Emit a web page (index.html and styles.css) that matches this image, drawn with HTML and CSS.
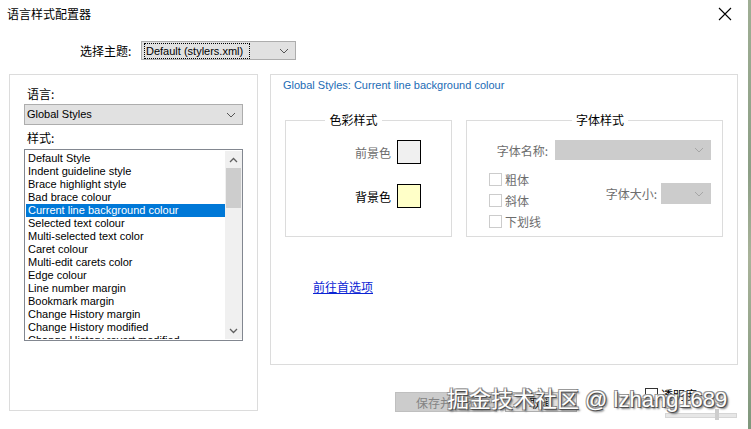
FILE: index.html
```html
<!DOCTYPE html>
<html lang="zh-CN">
<head>
    <meta charset="UTF-8">
    <meta name="viewport" content="width=device-width, initial-scale=1.0">
    <title>语言样式配置器</title>
    <link rel="stylesheet" href="styles.css">
</head>
<body>

<div class="window">
    <div class="dialog">
        <div class="titlebar">
            <span class="title">语言样式配置器</span>
            <svg class="close" width="14" height="14" viewBox="0 0 14 14">
                <path d="M1 1 L13 13 M13 1 L1 13" stroke="#000" stroke-width="1.1" fill="none"/>
            </svg>
        </div>

        <div class="theme-row">
            <span class="label">选择主题:</span>
            <div class="combo theme-combo">
                <span class="focus en">Default (stylers.xml)</span>
                <svg class="chev" width="10" height="6" viewBox="0 0 10 6"><path d="M1 1 L5 5 L9 1" stroke="#555" fill="none"/></svg>
            </div>
        </div>

        <div class="main">
            <div class="lang-group">
                <div class="field-label">语言:</div>
                <div class="combo lang-combo">
                    <span class="en">Global Styles</span>
                    <svg class="chev" width="10" height="6" viewBox="0 0 10 6"><path d="M1 1 L5 5 L9 1" stroke="#555" fill="none"/></svg>
                </div>
                <div class="field-label second">样式:</div>
                <div class="listbox">
                    <ul class="items en">
                        <li>Default Style</li>
                        <li>Indent guideline style</li>
                        <li>Brace highlight style</li>
                        <li>Bad brace colour</li>
                        <li class="selected">Current line background colour</li>
                        <li>Selected text colour</li>
                        <li>Multi-selected text color</li>
                        <li>Caret colour</li>
                        <li>Multi-edit carets color</li>
                        <li>Edge colour</li>
                        <li>Line number margin</li>
                        <li>Bookmark margin</li>
                        <li>Change History margin</li>
                        <li>Change History modified</li>
                        <li>Change History revert modified</li>
                    </ul>
                    <div class="vscroll">
                        <div class="arrow">
                            <svg width="9" height="6" viewBox="0 0 9 6"><path d="M1 5 L4.5 1.5 L8 5" stroke="#606060" stroke-width="1.3" fill="none"/></svg>
                        </div>
                        <div class="thumb"></div>
                        <div class="track"></div>
                        <div class="arrow">
                            <svg width="9" height="6" viewBox="0 0 9 6"><path d="M1 1 L4.5 4.5 L8 1" stroke="#606060" stroke-width="1.3" fill="none"/></svg>
                        </div>
                    </div>
                </div>
            </div>

            <div class="right-col">
                <div class="style-panel">
                    <div class="panel-title en">Global Styles: Current line background colour</div>
                    <div class="groups">
                        <fieldset class="group color-group">
                            <legend>色彩样式</legend>
                            <div class="color-row">
                                <span class="muted">前景色</span>
                                <span class="swatch fg"></span>
                            </div>
                            <div class="color-row">
                                <span>背景色</span>
                                <span class="swatch bg"></span>
                            </div>
                        </fieldset>
                        <fieldset class="group font-group">
                            <legend>字体样式</legend>
                            <div class="font-name-row">
                                <span class="muted">字体名称:</span>
                                <div class="combo disabled name-combo">
                                    <svg class="chev" width="10" height="6" viewBox="0 0 10 6"><path d="M1 1 L5 5 L9 1" stroke="#a6a6a6" fill="none"/></svg>
                                </div>
                            </div>
                            <div class="font-opts">
                                <div class="checks">
                                    <div class="check"><span class="box"></span><span class="muted">粗体</span></div>
                                    <div class="check"><span class="box"></span><span class="muted">斜体</span></div>
                                    <div class="check"><span class="box"></span><span class="muted">下划线</span></div>
                                </div>
                                <div class="size-row">
                                    <span class="muted">字体大小:</span>
                                    <div class="combo disabled size-combo">
                                        <svg class="chev" width="10" height="6" viewBox="0 0 10 6"><path d="M1 1 L5 5 L9 1" stroke="#a6a6a6" fill="none"/></svg>
                                    </div>
                                </div>
                            </div>
                        </fieldset>
                    </div>
                    <a class="pref-link" href="#">前往首选项</a>
                </div>

                <div class="bottom-row">
                    <button class="btn btn-disabled">保存并关闭</button>
                    <button class="btn">取消</button>
                    <div class="transparency">
                        <div class="check"><span class="box dark"></span><span>透明度</span></div>
                        <div class="slider"><span class="slider-thumb"></span></div>
                    </div>
                </div>
            </div>
        </div>
    </div>
    <div class="edge"></div>

    <div class="watermark">掘金技术社区 @ lzhang1689</div>
</div>

</body>
</html>
```

FILE: styles.css
```css
body {
    margin: 0;
    padding: 0;
    background-color: #fff;
    font-family: "Noto Sans CJK SC", "Noto Sans", sans-serif;
    font-size: 12px;
    color: #000;
}
.en {
    font-family: "Liberation Sans", "Noto Sans CJK SC", sans-serif;
    font-size: 11px;
}
.window {
    position: relative;
    display: flex;
    width: 751px;
    height: 429px;
    overflow: hidden;
}
.dialog {
    width: 748px;
    height: 429px;
}
.edge {
    width: 3px;
    background: linear-gradient(#9fae94, #8c9f86 40%, #a9b39a 60%, #7f977c);
}

.titlebar {
    height: 28px;
    display: flex;
    align-items: center;
    justify-content: space-between;
    padding: 0 16px 0 7px;
}
.title {
    line-height: 16px;
}

.theme-row {
    display: flex;
    align-items: center;
    margin-top: 13px;
    padding-left: 80px;
}
.theme-row .label {
    width: 61px;
}

.combo {
    box-sizing: border-box;
    display: flex;
    align-items: center;
    justify-content: space-between;
    background-color: #e1e1e1;
    border: 1px solid #adadad;
    padding: 0 6px 0 2px;
    line-height: 15px;
}
.combo.disabled {
    background-color: #cccccc;
    border-color: #cccccc;
    justify-content: flex-end;
}
.theme-combo {
    width: 155px;
    height: 19px;
}
.theme-combo .focus {
    border: 1px dotted #000;
    padding: 0 6px 0 1px;
    line-height: 14px;
}
.lang-combo {
    height: 21px;
    padding-left: 2px;
}

.main {
    display: flex;
    margin-top: 14px;
    padding-left: 9px;
}
.lang-group {
    box-sizing: border-box;
    width: 249px;
    height: 337px;
    border: 1px solid #dcdcdc;
    padding: 11px 14px 0 14px;
}
.field-label {
    line-height: 16px;
    padding-left: 3px;
    margin-bottom: 2px;
}
.field-label.second {
    margin-top: 5px;
    margin-bottom: 3px;
}

.listbox {
    box-sizing: border-box;
    display: flex;
    height: 192px;
    border: 1px solid #828790;
    padding: 1px 0 1px 1px;
}
.items {
    flex: 1;
    list-style: none;
    margin: 0;
    padding: 1px 0 0 0;
    overflow: hidden;
}
.items li {
    height: 13px;
    line-height: 13px;
    padding-left: 2px;
    white-space: nowrap;
}
.items li.selected {
    background-color: #0078d7;
    color: #fff;
}
.vscroll {
    width: 17px;
    display: flex;
    flex-direction: column;
    background-color: #f0f0f0;
}
.vscroll .arrow {
    height: 17px;
    display: flex;
    align-items: center;
    justify-content: center;
}
.vscroll .thumb {
    height: 40px;
    margin: 0 1px;
    background-color: #cdcdcd;
}
.vscroll .track {
    flex: 1;
}

.right-col {
    margin-left: 12px;
    width: 468px;
}
.style-panel {
    box-sizing: border-box;
    height: 291px;
    border: 1px solid #dcdcdc;
    padding: 2px 0 0 12px;
}
.panel-title {
    line-height: 16px;
    color: #1c6bb5;
}
.groups {
    display: flex;
    gap: 14px;
    margin-top: 19px;
    padding-left: 2px;
}
.group {
    box-sizing: border-box;
    margin: 0;
    border: 1px solid #dcdcdc;
    min-width: 0;
}
.group legend {
    margin: 0 auto;
    padding: 0 4px;
    line-height: 16px;
}
.color-group {
    width: 167px;
    padding: 12px 30px 28px 0;
    display: flex;
    flex-direction: column;
    align-items: flex-end;
    gap: 20px;
}
.color-row {
    display: flex;
    align-items: center;
    gap: 6px;
}
.swatch {
    box-sizing: border-box;
    width: 24px;
    height: 24px;
    border: 1px solid #000;
}
.swatch.fg {
    background-color: #f0f0f0;
}
.swatch.bg {
    background-color: #ffffc8;
}
.muted {
    color: #6d6d6d;
}

.font-group {
    width: 257px;
    padding: 12px 11px 8px 22px;
}
.font-name-row {
    display: flex;
    align-items: center;
    justify-content: flex-end;
    gap: 7px;
}
.name-combo {
    width: 156px;
    height: 20px;
}
.font-opts {
    display: flex;
    justify-content: space-between;
    align-items: flex-start;
    margin-top: 13px;
}
.checks {
    display: flex;
    flex-direction: column;
    gap: 8px;
}
.check {
    display: flex;
    align-items: center;
    gap: 3px;
    line-height: 13px;
}
.box {
    box-sizing: border-box;
    width: 13px;
    height: 13px;
    border: 1px solid #cccccc;
    background-color: #fff;
}
.box.dark {
    border-color: #333;
}
.size-row {
    display: flex;
    align-items: center;
    gap: 4px;
    margin-top: 10px;
}
.size-combo {
    width: 50px;
    height: 21px;
}
.pref-link {
    display: inline-block;
    margin: 42px 0 0 30px;
    color: #0b24d4;
    text-decoration: underline;
    line-height: 16px;
}

.bottom-row {
    display: flex;
    align-items: flex-start;
    margin-top: 23px;
    padding-left: 125px;
}
.btn {
    box-sizing: border-box;
    height: 20px;
    margin-top: 4px;
    border: 1px solid #adadad;
    background-color: #e1e1e1;
    font-family: inherit;
    font-size: 12px;
    padding: 0;
    width: 72px;
    margin-left: 8px;
}
.btn-disabled {
    width: 102px;
    margin-left: 0;
    background-color: #cccccc;
    border-color: #bfbfbf;
    color: #838383;
}
.transparency {
    margin-left: 68px;
    display: flex;
    flex-direction: column;
}
.slider {
    position: relative;
    width: 70px;
    height: 3px;
    margin: 12px 0 0 20px;
    background-color: #e7e7e7;
    border: 1px solid #d6d6d6;
}
.slider-thumb {
    position: absolute;
    left: 49px;
    top: -5px;
    width: 4px;
    height: 11px;
    background-color: #cdcdcd;
}

.watermark {
    position: absolute;
    left: 447px;
    top: 384px;
    font-family: "Liberation Sans", "Noto Sans CJK SC", sans-serif;
    font-size: 22px;
    line-height: 32px;
    color: #fff;
    white-space: nowrap;
    text-shadow: 1px 1px 0 #4d4d4d, -1px -1px 0 #999, 1px -1px 0 #858585, -1px 1px 0 #858585, 2px 2px 2px #707070;
    pointer-events: none;
}
```
